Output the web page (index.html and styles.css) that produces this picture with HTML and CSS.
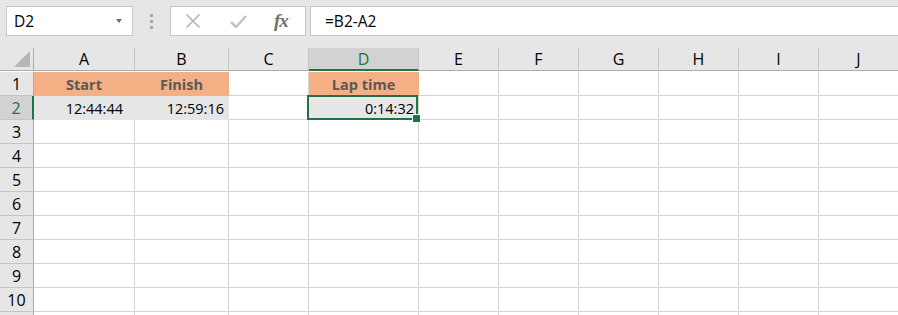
FILE: index.html
```html
<!DOCTYPE html>
<html lang="en">
<head>
    <meta charset="UTF-8">
    <title>Lap time</title>
    <link rel="stylesheet" href="styles.css">
</head>
<body>
    <div class="toolbar">
        <div class="namebox">
            <span>D2</span>
            <span class="caret"></span>
        </div>
        <div class="grip"><i></i><i></i><i></i></div>
        <div class="fx-buttons">
            <svg width="16" height="14" viewBox="0 0 16 14"><path d="M1.5 0.5 L14.5 13.5 M14.5 0.5 L1.5 13.5" stroke="#b4b4b4" stroke-width="1.6" fill="none"/></svg>
            <svg width="17" height="13" viewBox="0 0 17 13"><path d="M1 7 L6 12 L16 1" stroke="#c4c4c4" stroke-width="2.6" fill="none"/></svg>
            <span class="fx">fx</span>
        </div>
        <div class="formula">=B2-A2</div>
    </div>

    <div class="sheet">
        <div class="corner"><span class="tri"></span></div>
        <div class="col-head">A</div>
        <div class="col-head">B</div>
        <div class="col-head">C</div>
        <div class="col-head active">D</div>
        <div class="col-head">E</div>
        <div class="col-head">F</div>
        <div class="col-head">G</div>
        <div class="col-head">H</div>
        <div class="col-head">I</div>
        <div class="col-head">J</div>

        <div class="row-head">1</div>
        <div class="cell title">Start</div>
        <div class="cell title">Finish</div>
        <div class="cell"></div>
        <div class="cell title">Lap time</div>
        <div class="cell"></div><div class="cell"></div><div class="cell"></div><div class="cell"></div><div class="cell"></div><div class="cell"></div>

        <div class="row-head active">2</div>
        <div class="cell time first">12:44:44</div>
        <div class="cell time">12:59:16</div>
        <div class="cell"></div>
        <div class="cell time selected">0:14:32</div>
        <div class="cell"></div><div class="cell"></div><div class="cell"></div><div class="cell"></div><div class="cell"></div><div class="cell"></div>
    </div>
    <div class="sheet" id="rest"></div>

    <script>
        const rest = document.getElementById('rest')
        for (let r = 3; r <= 11; r++) {
            // row 11 only peeks in at the bottom edge, its number is out of view
            let html = `<div class="row-head">${r <= 10 ? r : ''}</div>`
            for (let c = 0; c < 10; c++) html += '<div class="cell"></div>'
            rest.insertAdjacentHTML('beforeend', html)
        }
    </script>
</body>
</html>
```

FILE: styles.css
```css
* {
    margin: 0;
    padding: 0;
    box-sizing: border-box;
}

body {
    width: 898px;
    height: 315px;
    overflow: hidden;
    background-color: #e6e6e6;
    font-family: "Open Sans", "Liberation Sans", sans-serif;
    color: #000;
}

.toolbar {
    height: 48px;
    display: flex;
    align-items: flex-start;
    padding-top: 6px;
}

.namebox {
    margin-left: 6px;
    width: 127px;
    height: 30px;
    background-color: #fff;
    border: 1px solid #c6c6c6;
    display: flex;
    align-items: center;
    justify-content: space-between;
    padding: 0 10px 0 7px;
    font-size: 15.5px;
}

.caret {
    width: 0;
    height: 0;
    border-left: 3.5px solid transparent;
    border-right: 3.5px solid transparent;
    border-top: 4px solid #6e6e6e;
}

.grip {
    width: 37px;
    height: 30px;
    display: flex;
    flex-direction: column;
    align-items: center;
    justify-content: center;
    gap: 3px;

    i {
        width: 3px;
        height: 3px;
        background-color: #a8a8a8;
    }
}

.fx-buttons {
    width: 136px;
    height: 30px;
    background-color: #fff;
    border: 1px solid #c6c6c6;
    display: flex;
    align-items: center;
    padding-left: 14px;
    gap: 29px;

    .fx {
        font-family: "Liberation Serif", serif;
        font-style: italic;
        font-weight: bold;
        font-size: 19px;
        color: #707070;
        margin-left: -2px;
        letter-spacing: -1px;
    }
}

.formula {
    margin-left: 4px;
    flex: 1;
    height: 30px;
    background-color: #fff;
    border: 1px solid #c6c6c6;
    border-right: none;
    display: flex;
    align-items: center;
    padding-left: 14px;
    font-size: 15.5px;
}

.sheet {
    display: grid;
    grid-template-columns: 34px 101px 94px 80px 110px 80px 80px 80px 80px 80px 80px;
    grid-auto-rows: 24px;
    background-color: #fff;
}

.corner,
.col-head {
    height: 23px;
    background-color: #e6e6e6;
    border-bottom: 1px solid #ababab;
}

.corner {
    position: relative;
    border-right: 1px solid #ababab;

    .tri {
        position: absolute;
        right: 3px;
        bottom: 3px;
        width: 0;
        height: 0;
        border-left: 16px solid transparent;
        border-bottom: 16px solid #b6b6b6;
    }
}

.col-head {
    border-right: 1px solid #c4c4c4;
    display: flex;
    align-items: center;
    justify-content: center;
    font-size: 16px;

    &.active {
        background-color: #d2d2d2;
        color: #217346;
        border-bottom: 2px solid #217346;
    }
}

.row-head {
    background-color: #e6e6e6;
    border-right: 1px solid #ababab;
    border-bottom: 1px solid #c4c4c4;
    display: flex;
    align-items: center;
    justify-content: center;
    font-size: 16px;
    padding-top: 1px;

    &.active {
        background-color: #d2d2d2;
        color: #217346;
        border-right: 2px solid #217346;
    }
}

.cell {
    border-right: 1px solid #d4d4d4;
    border-bottom: 1px solid #d4d4d4;
    display: flex;
    align-items: center;
    font-size: 14.5px;
    padding-top: 2px;
    white-space: nowrap;
}

.title {
    background-color: #f4b084;
    border-color: #f4b084;
    justify-content: center;
    font-weight: bold;
    color: #595959;
}

.time {
    background-color: #e7e6e6;
    border-color: #e7e6e6;
    justify-content: flex-end;
    padding-right: 4px;

    &.first {
        padding-right: 11px;
    }
}

.selected {
    position: relative;
    border-color: #d4d4d4;

    &::before {
        content: '';
        position: absolute;
        top: -1px;
        left: -2px;
        right: 0;
        bottom: -1px;
        border: 2px solid #217346;
    }

    &::after {
        content: '';
        position: absolute;
        right: -3px;
        bottom: -4px;
        width: 7px;
        height: 7px;
        background-color: #217346;
        border: 1px solid #fff;
    }
}
```
